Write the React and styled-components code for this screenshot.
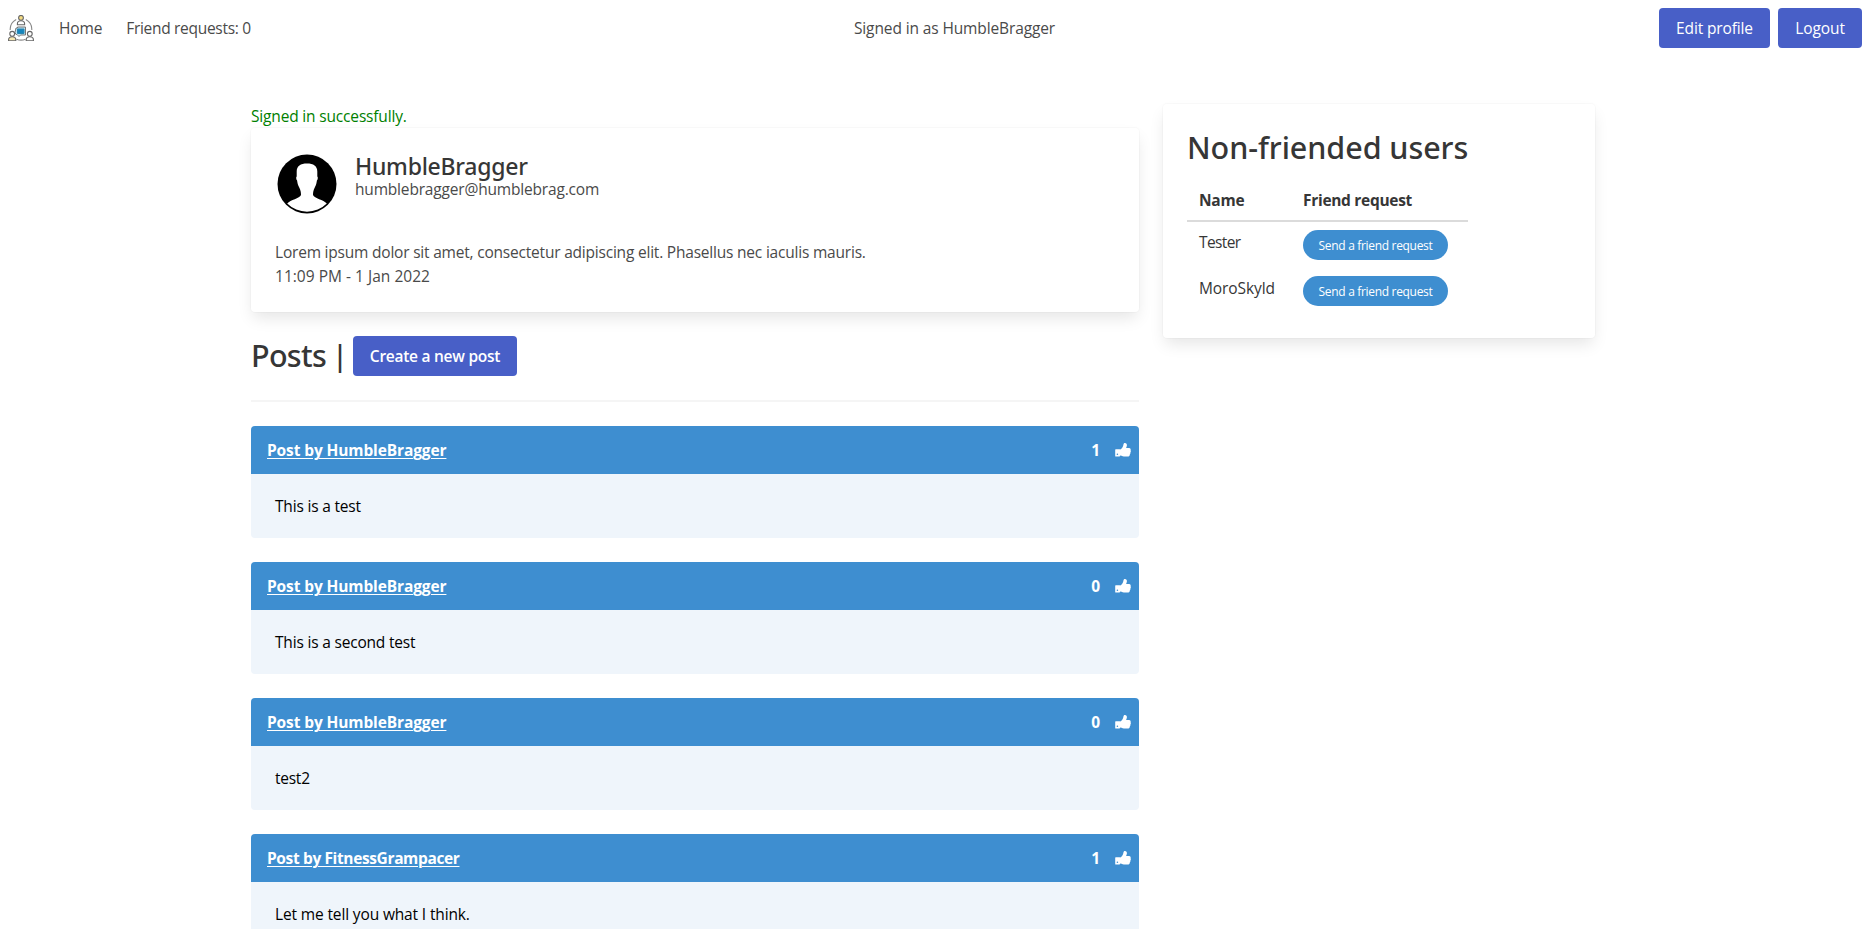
import React from 'react';
import styled, { createGlobalStyle } from 'styled-components';

const GlobalStyle = createGlobalStyle`
  *, *::before, *::after { box-sizing: border-box; }
  html, body { margin: 0; padding: 0; }
  html { overflow: hidden; background: #fff; }
  body {
    height: 929px;
    overflow: hidden;
    color: #4a4a4a;
    font-family: "Segoe UI", "Open Sans", "Noto Sans", sans-serif;
    font-size: 15.5px;
    line-height: 24px;
  }
  h1, h2, p { margin: 0; font-weight: inherit; }
`;

const Text = styled.span`
  letter-spacing: ${(p) => p.$track || 0}px;
  white-space: nowrap;
`;

const Navbar = styled.nav`
  display: grid;
  grid-template-columns: 1fr auto 1fr;
  align-items: center;
  height: 56px;
  padding: 0 5px 0 8px;
`;
const NavStart = styled.div`
  display: flex;
  align-items: center;
`;
const Brand = styled.a`
  display: flex;
  width: 26px;
  margin-right: 25px;
`;
const NavLink = styled(Text).attrs({ as: 'a' })`
  margin-right: 24px;
`;
const NavStatus = styled(Text)`
  transform: translateX(19.5px);
`;
const NavEnd = styled.div`
  display: flex;
  justify-content: flex-end;
  gap: 8px;
`;

const Button = styled.button`
  display: inline-flex;
  align-items: center;
  justify-content: center;
  width: ${(p) => p.$width}px;
  height: 40px;
  padding: 0;
  border: 0;
  border-radius: 4px;
  background: #485fc7;
  color: #fff;
  font: inherit;
  font-weight: ${(p) => (p.$strong ? 600 : 400)};
`;

const Page = styled.main`
  display: grid;
  grid-template-columns: 888px 432px;
  gap: 24px;
  align-items: start;
  padding: 48px 0 0 251px;
`;

const Card = styled.section`
  padding: 24px;
  border-radius: 4px;
  background: #fff;
  box-shadow: 0 8px 16px -2px rgba(10, 10, 10, 0.1), 0 0 0 1px rgba(10, 10, 10, 0.02);
`;

const Notice = styled.p`
  color: green;
`;

const Media = styled.div`
  display: flex;
  gap: 16px;
  height: 64px;
  margin-bottom: 24px;
`;
const UserName = styled.h2`
  padding-top: 1px;
  color: #363636;
  font: 500 23px/26px "Noto Sans", sans-serif;
`;
const Email = styled.p`
  line-height: 20px;
`;

const Heading = styled.h1`
  padding-top: 1px;
  color: #363636;
  font: 500 30.5px/36px "Noto Sans", sans-serif;
`;

const PostsBar = styled.div`
  display: flex;
  align-items: center;
  height: 40px;
  margin-top: 24px;
`;
const PostsHeading = styled(Heading)`
  display: flex;
  width: 102px;
  padding: 0 0 2px;
`;
const Bar = styled.span`
  display: flex;
  justify-content: center;
  width: 4px;
  height: 31px;
  margin: 4px 11px 0 auto;
  font-size: 29px;
  line-height: 27px;
`;
const Divider = styled.hr`
  height: 2px;
  margin: 24px 0;
  border: 0;
  background: #f5f5f5;
`;

const Post = styled.article`
  margin-bottom: 24px;
  border-radius: 4px;
  background: #eff5fb;
`;
const PostHeader = styled.header`
  display: flex;
  align-items: center;
  height: 48px;
  padding: 0 8px 0 16px;
  border-radius: 4px 4px 0 0;
  background: #3e8ed0;
  color: #fff;
  font-weight: 700;
`;
const PostLink = styled(Text).attrs({ as: 'a' })`
  margin-right: auto;
  text-decoration: underline;
  text-decoration-thickness: 1px;
  text-underline-offset: 2px;
`;
const LikeButton = styled.span`
  display: flex;
  width: 16px;
  margin-left: 15px;
`;
const PostBody = styled.div`
  padding: 20px 24px;
  color: #000;
`;

const UsersTable = styled.table`
  width: 281px;
  margin-top: 15px;
  border-collapse: separate;
  border-spacing: 0;
  table-layout: fixed;
  color: #363636;
`;
const HeadCell = styled.th`
  width: ${(p) => p.$width}px;
  height: 42px;
  padding: 8px 12px;
  border-bottom: 2px solid #dbdbdb;
  text-align: left;
  font-weight: 700;
`;
const Cell = styled.td`
  height: 46px;
  padding: 8px 12px;
  vertical-align: top;
`;
const Pill = styled.button`
  display: flex;
  align-items: center;
  justify-content: center;
  width: 145px;
  height: 30px;
  padding: 2px 0 0;
  border: 0;
  border-radius: 15px;
  background: #3e8ed0;
  color: #fff;
  font: inherit;
  font-size: 12px;
`;

const Person = ({ x, y, tint }) => (
  <g transform={`translate(${x} ${y})`} stroke="#666" strokeWidth="1.1">
    <path d="M-3.6 7v-1c0-2 1.4-3 3.6-3s3.6 1 3.6 3v1z" fill={tint || '#fff'} />
    <circle r="2.4" fill={tint ? '#fff' : '#f5dc83'} />
  </g>
);

const Logo = () => (
  <svg width="26" height="26" viewBox="0 0 26 26" fill="none">
    <path d="M8.2 4.6A11.2 11.2 0 0 0 2.2 15M17.800 4.600A11.200 11.200 0 0 1 23.800 15M8.500 24.200c3 1.300 6 1.300 9 0" stroke="#888" strokeWidth="1.1" />
    <path d="M8 13h1.500v-1h8v8h-5l-1.500 1.500-2-2H8l-1-2z" fill="#bde3f3" stroke="#777" />
    <path d="M9.500 14h6.500v4.500H9.500z" fill="#1685bd" stroke="#2a86b0" />
    <Person x={13} y={2.8} />
    <Person x={4.2} y={18.8} tint="#f8e9b0" />
    <Person x={21.8} y={18.8} tint="#fff" />
  </svg>
);

const Avatar = () => (
  <svg width="64" height="64" viewBox="0 0 64 64">
    <circle cx="32" cy="32" r="29.5" />
    <path
      fill="#fff"
      d="M32 11.500c-6.500 0-10.300 2.600-10.300 8v5c-.9.800-.5 3 .4 4 .3 2.500.8 4.700 1.900 6.500 1.700 3 2 5.500 2 8-1.500 3.800-10.500 4.500-13.800 8.500A28 28 0 0 0 51.800 51.500C48.500 47.500 39.500 46.800 38 43c0-2.500.3-5 2-8 1.100-1.800 1.600-4 1.900-6.500.9-1 1.300-3.200.4-4v-5c0-5.400-3.800-8-10.300-8z"
    />
  </svg>
);

const ThumbsUp = () => (
  <svg width="16" height="16" viewBox="0 0 16 16">
    <path
      fill="#fff"
      d="M.8 7.200h3.800l.7.400C7.500 6.300 8 4.500 8.500 2.200 8.700 1.300 9.200 1 9.900 1c1.500.1 2.100 1.200 2 2.600-.1 1-.5 1.700-.8 2.500h3c1.300.1 1.900 1.200 1.500 2.200.4.700.3 1.600-.2 2.200.2.800 0 1.500-.6 2 .1 1.300-.7 2.100-2.300 2.100H10c-1.700 0-2.900-.6-4.700-1l-.7.900H.8q-.6 0-.6-.6V7.800q0-.6.6-.6z"
    />
    <circle cx="2.400" cy="12.300" r=".8" fill="#3e8ed0" />
  </svg>
);

const users = [
  { name: 'Tester', track: -0.6 },
  { name: 'MoroSkyld', track: -0.1 },
];

const posts = [
  { author: 'Post by HumbleBragger', track: -0.12, likes: 1, body: 'This is a test', bodyTrack: -0.19 },
  { author: 'Post by HumbleBragger', track: -0.12, likes: 0, body: 'This is a second test', bodyTrack: -0.19 },
  { author: 'Post by HumbleBragger', track: -0.12, likes: 0, body: 'test2', bodyTrack: -0.25 },
  { author: 'Post by FitnessGrampacer', track: -0.37, likes: 1, body: 'Let me tell you what I think.', bodyTrack: -0.14 },
];

export default function App() {
  return (
    <>
      <GlobalStyle />
      <Navbar>
        <NavStart>
          <Brand><Logo /></Brand>
          <NavLink $track={-0.15}>Home</NavLink>
          <NavLink $track={-0.3}>Friend requests: 0</NavLink>
        </NavStart>
        <NavStatus $track={-0.12}>Signed in as HumbleBragger</NavStatus>
        <NavEnd>
          <Button $width={111}><Text $track={-0.13}>Edit profile</Text></Button>
          <Button $width={84}><Text $track={-0.08}>Logout</Text></Button>
        </NavEnd>
      </Navbar>
      <Page>
        <div>
          <Notice><Text $track={-0.17}>Signed in successfully.</Text></Notice>
          <Card>
            <Media>
              <Avatar />
              <div>
                <UserName><Text $track={-0.26}>HumbleBragger</Text></UserName>
                <Email><Text $track={-0.18}>humblebragger@humblebrag.com</Text></Email>
              </div>
            </Media>
            <p><Text $track={-0.206}>Lorem ipsum dolor sit amet, consectetur adipiscing elit. Phasellus nec iaculis mauris.</Text></p>
            <p><Text $track={0.02}>11:09 PM - 1 Jan 2022</Text></p>
          </Card>
          <PostsBar>
            <PostsHeading>
              <Text $track={-0.7}>Posts</Text>
              <Bar>|</Bar>
            </PostsHeading>
            <Button $width={164} $strong><Text $track={-0.26}>Create a new post</Text></Button>
          </PostsBar>
          <Divider />
          {posts.map((post, i) => (
            <Post key={i}>
              <PostHeader>
                <PostLink $track={post.track}>{post.author}</PostLink>
                <span>{post.likes}</span>
                <LikeButton><ThumbsUp /></LikeButton>
              </PostHeader>
              <PostBody><Text $track={post.bodyTrack}>{post.body}</Text></PostBody>
            </Post>
          ))}
        </div>
        <Card>
          <Heading><Text $track={-0.06}>Non-friended users</Text></Heading>
          <UsersTable>
            <thead>
              <tr>
                <HeadCell $width={104}><Text $track={-0.25}>Name</Text></HeadCell>
                <HeadCell $width={177}><Text $track={-0.3}>Friend request</Text></HeadCell>
              </tr>
            </thead>
            <tbody>
              {users.map((user) => (
                <tr key={user.name}>
                  <Cell><Text $track={user.track}>{user.name}</Text></Cell>
                  <Cell><Pill><Text $track={-0.32}>Send a friend request</Text></Pill></Cell>
                </tr>
              ))}
            </tbody>
          </UsersTable>
        </Card>
      </Page>
    </>
  );
}
